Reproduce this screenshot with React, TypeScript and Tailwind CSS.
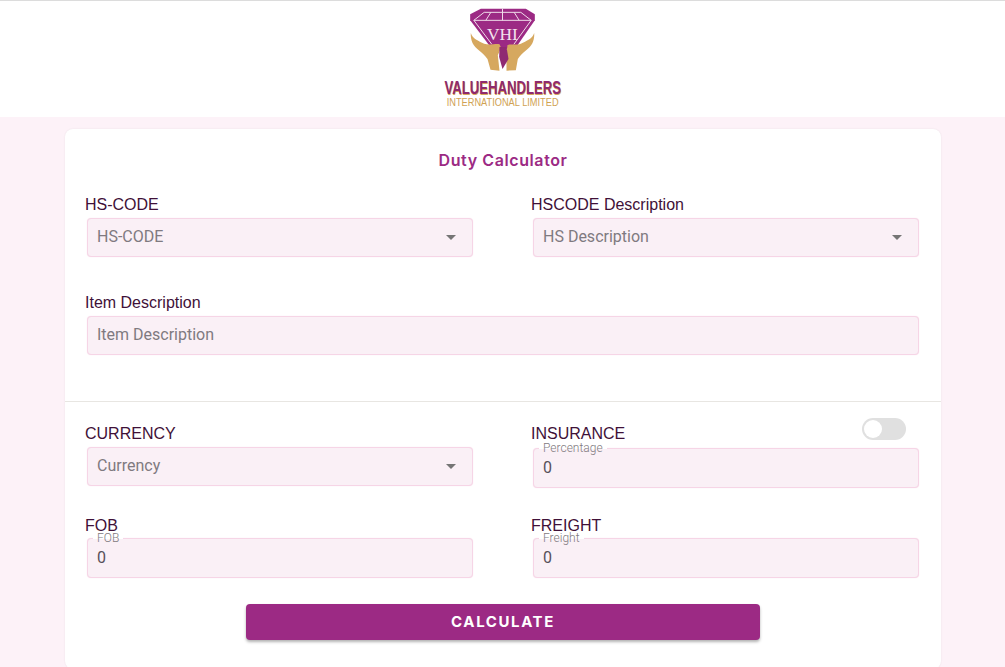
const Logo = () => (
  <div className="flex flex-col items-center">
    <svg width="67" height="65" viewBox="150 20 200 195" className="block">
      {/* diamond */}
      <path d="M185 25 L320 25 L347 42 L347 60 L295 135 L250 150 L210 135 L153 60 L153 42 Z" fill="#9c2a84" />
      <g stroke="#f0dcea" strokeWidth="3" fill="none">
        <path d="M195 36 L305 36 L336 60 L164 60 Z" />
        <path d="M250 25 L250 60 M215 36 L200 60 M285 36 L300 60" />
        <path d="M164 60 L218 132 M336 60 L284 132" />
      </g>
      <text x="250" y="118" textAnchor="middle" fontFamily="'Liberation Serif', serif" fontSize="52" fill="#f3e3ee">
        VHI
      </text>
      {/* hands */}
      <path
        d="M155 98 C160 115 178 122 195 130 C212 136 232 128 241 132 L246 142 L236 165 L241 211 L214 208 L205 176 C190 155 168 145 160 128 C156 118 154 108 155 98 Z"
        fill="#d6a85f"
      />
      <path
        d="M345 98 C340 115 322 122 305 130 C288 136 276 130 265 134 L262 160 L262 211 L290 210 L296 176 C310 155 332 145 340 128 C344 118 346 108 345 98 Z"
        fill="#d6a85f"
      />
      <path d="M241 140 L262 140 L268 176 L250 206 L240 170 Z" fill="#8f2a72" />
    </svg>
    <div className="mt-[7px] font-['Liberation_Sans',sans-serif] text-[18px] leading-[18px] font-bold whitespace-nowrap text-[#8f2a6e] [transform:scaleX(0.73)] [text-shadow:0.5px_0.5px_0_#d6a75c]">
      VALUEHANDLERS
    </div>
    <div className="-mt-px font-['Liberation_Sans',sans-serif] text-[11px] leading-[12px] whitespace-nowrap text-[#d0a253] [transform:scaleX(0.84)]">
      INTERNATIONAL LIMITED
    </div>
  </div>
);

const fieldBox =
  "ml-[2px] rounded-[4px] border border-[#f6d5e6] bg-[#faf0f6] shadow-[0_0_1px_#f6d5e6] flex items-center pl-[9px] pr-[15px] text-[16px]";

const Label = ({ text }: { text: string }) => (
  <div className="font-['Liberation_Sans',sans-serif] text-[16px] leading-[20px] text-[#3f1138]">{text}</div>
);

const SelectField = ({ label, placeholder }: { label: string; placeholder: string }) => (
  <div className="pt-px">
    <Label text={label} />
    <div className={`${fieldBox} mt-[3px] h-[39px] w-[386px] justify-between pb-[2px] text-[#7f7a80]`}>
      <span>{placeholder}</span>
      <span className="mt-[2px] mr-[1px] h-0 w-0 border-x-[5px] border-t-[5px] border-x-transparent border-t-[#757575]" />
    </div>
  </div>
);

const NumberField = ({ label, legend, tight }: { label: string; legend: string; tight?: boolean }) => (
  <div className={tight ? "pt-[3px]" : "pt-px"}>
    <Label text={label} />
    <div className={`${fieldBox} relative ${tight ? "mt-[2px]" : "mt-[4px]"} h-[40px] w-[386px] text-[#57505a]`}>
      {/* the white band cuts the outline behind the legend */}
      <span className="absolute top-[-8px] left-[5px] bg-[linear-gradient(transparent_5px,white_5px,white_8px,transparent_8px)] px-[4px] text-[12px] leading-[14px] font-light text-[#7f7a80]">
        {legend}
      </span>
      <span>0</span>
    </div>
  </div>
);

export default function App() {
  return (
    <div className="h-[667px] overflow-hidden bg-[#fdf2f8] font-['Roboto',sans-serif]">
      <header className="flex h-[117px] justify-center border-t border-[#dcdcdc] bg-white pt-[6px]">
        <Logo />
      </header>

      <main className="mx-[65px] mt-[12px] h-[540px] w-[876px] rounded-[8px] bg-white shadow-[0_0_2px_rgba(0,0,0,0.08)]">
        <h1 className="pt-[21px] text-center font-['Inter',sans-serif] text-[16px] leading-[20px] font-semibold tracking-[0.6px] text-[#9c2a84]">
          Duty Calculator
        </h1>

        <div className="mt-[24px] px-[20px]">
          <div className="grid grid-cols-[446px_1fr]">
            <SelectField label="HS-CODE" placeholder="HS-CODE" />
            <SelectField label="HSCODE Description" placeholder="HS Description" />
          </div>
          <div className="mt-[35px] pt-px">
            <Label text="Item Description" />
            <div className={`${fieldBox} mt-[3px] h-[39px] w-[832px] pb-[2px] text-[#7f7a80]`}>Item Description</div>
          </div>
        </div>

        <div className="mt-[46px] h-px bg-[#e8e6e2]" />

        <div className="mt-[21px] grid grid-cols-[446px_1fr] gap-y-[25px] px-[20px]">
          <SelectField label="CURRENCY" placeholder="Currency" />
          <div className="relative">
            <NumberField label="INSURANCE" legend="Percentage" />
            <span className="absolute top-[-5px] left-[331px] flex h-[22px] w-[44px] items-center rounded-full bg-[#e0e0e0] pl-[2px]">
              <span className="h-[18px] w-[18px] rounded-full bg-white" />
            </span>
          </div>
          <NumberField label="FOB" legend="FOB" tight />
          <NumberField label="FREIGHT" legend="Freight" tight />
        </div>

        <div className="mt-[26px] flex justify-center">
          <button className="h-[36px] w-[514px] rounded-[4px] bg-[#9c2a84] pt-px font-['Inter',sans-serif] text-[15px] font-bold tracking-[1.6px] text-white shadow-[0_2px_3px_rgba(0,0,0,0.3)]">
            CALCULATE
          </button>
        </div>
      </main>
    </div>
  );
}
